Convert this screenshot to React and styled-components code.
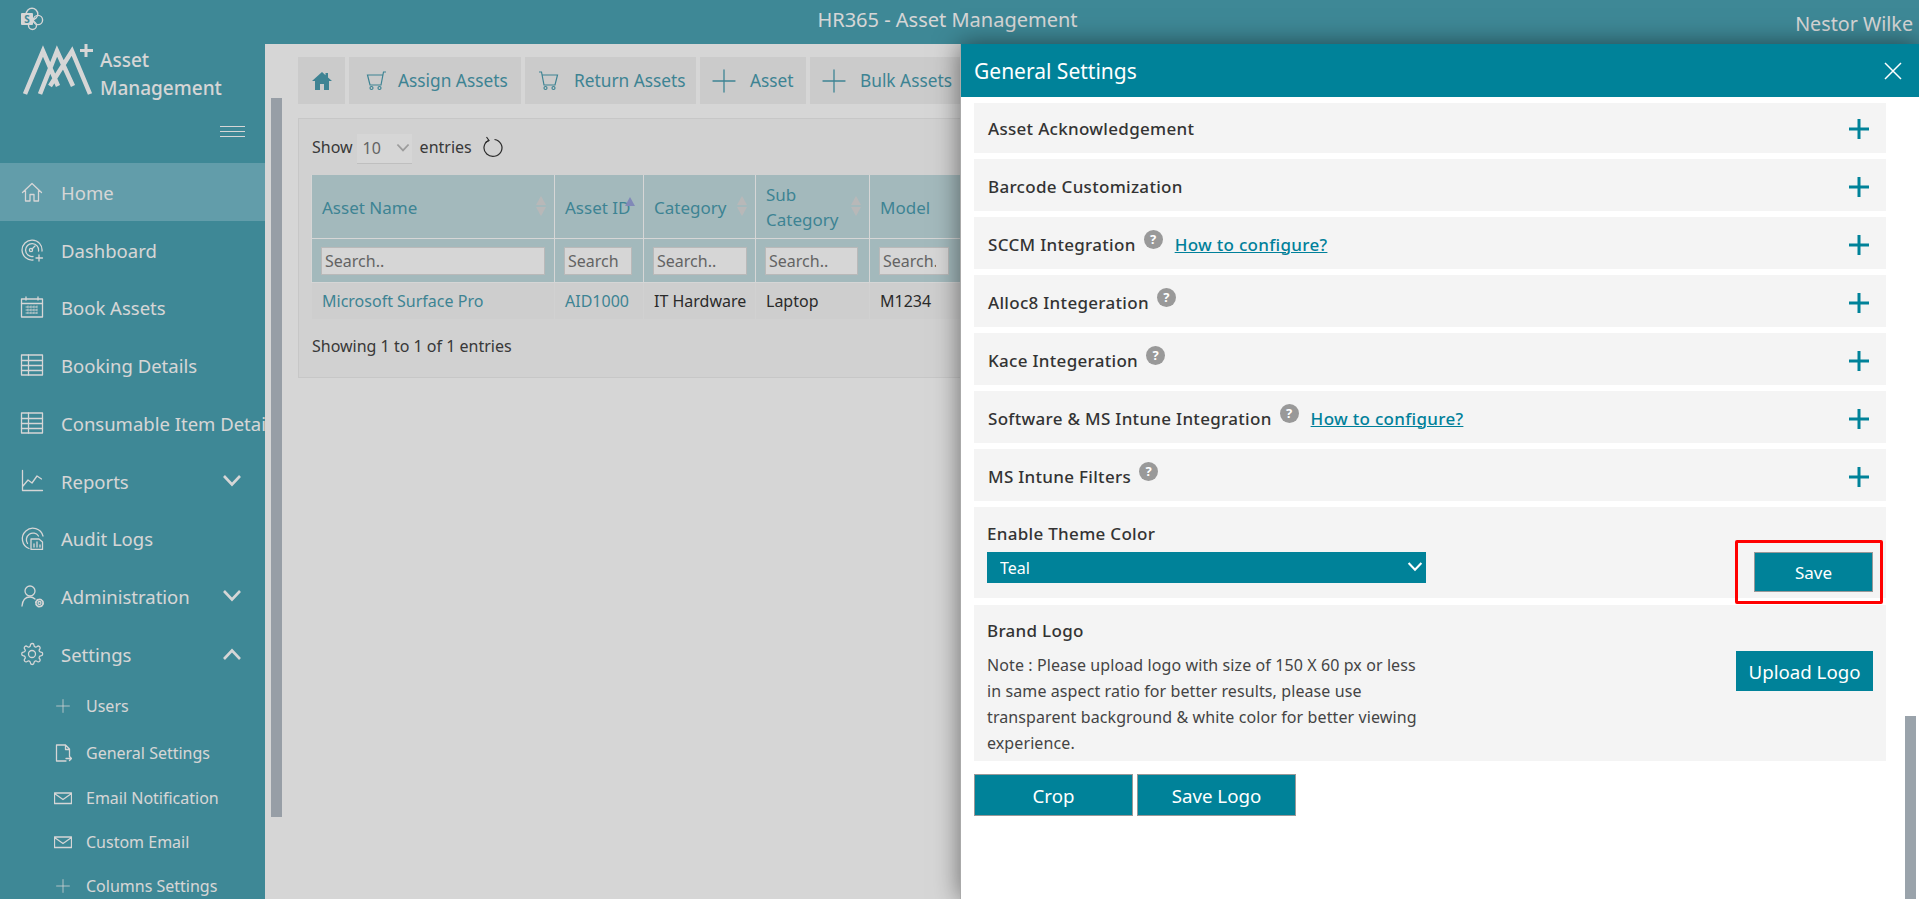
import React from "react";
import styled, { createGlobalStyle, css } from "styled-components";

const FONT = `"Noto Sans", "Open Sans", sans-serif`;

const GlobalStyle = createGlobalStyle`
  html, body {
    margin: 0;
    padding: 0;
    height: 100%;
    overflow: hidden;
    background: #fff;
    font-family: ${FONT};
  }
  * { box-sizing: border-box; }
`;

const labelFont = css`
  font-size: 17px;
  font-weight: 500;
  letter-spacing: 0.3px;
`;

//Icons
const Line = ({ size = 24, view = "0 0 24 24", width = 1.3, children }) => (
  <svg width={size} height={size} viewBox={view} fill="none" stroke="currentColor" strokeWidth={width} strokeLinecap="round" strokeLinejoin="round">
    {children}
  </svg>
);

const HomeIcon = () => (
  <Line><path d="M2.5 12.5 12 3.5l9.5 9M5.5 10.5V21h4.5v-6.5h4V21h4.5V10.5" /></Line>
);
const GaugeIcon = () => (
  <Line>
    <path d="M13 22a10 10 0 1 1 9-9" />
    <path d="M13 18.5a6.5 6.5 0 1 1 5.5-5.5" />
    <circle cx="11" cy="12" r="1.6" />
    <path d="m12 11 3-3M19 17v6M16 20h6.5" />
  </Line>
);
const CalendarIcon = () => (
  <Line>
    <rect x="1.5" y="4" width="21" height="18" />
    <path d="M1.5 8.5h21M6 2v3M18 2v3" />
    <path d="M6 12h12M6 15h12M6 18h12M8 11v8M11 11v8M14 11v8M17 11v8" strokeWidth="0.9" strokeDasharray="1.5 1.5" />
  </Line>
);
const TableIcon = () => (
  <Line>
    <rect x="1.5" y="2" width="21" height="20" />
    <path d="M1.5 7.5h21M1.5 12.5h21M1.5 17.5h21M8.5 2v20" />
  </Line>
);
const ChartIcon = () => (
  <Line><path d="M2.5 1.5v20h20M3 17l5-6 4 3 5-7 4.5 3" /></Line>
);
const AuditIcon = () => (
  <Line>
    <path d="M9 22.5A10.5 10.5 0 1 1 23 10" />
    <path d="M7.5 17.5A6.5 6.5 0 1 1 18.5 10" />
    <path d="M11 13h8l3.5 3v7.5H11zM14 21v-3M17 21v-5M20 21v-2" />
  </Line>
);
const AdminIcon = () => (
  <Line>
    <circle cx="10" cy="7" r="5" />
    <path d="M2 22c.5-5.500 3.500-9 8-9 2 0 3.500.6 5 2" />
    <circle cx="19.500" cy="19" r="1.500" />
    <circle cx="19.500" cy="19" r="3.600" strokeWidth="1.800" strokeDasharray="1.400 1.400" />
  </Line>
);
const GearIcon = () => (
  <Line>
    <circle cx="12" cy="12" r="3.500" />
    <path d="M12.200 1.500c1 0 1.800.8 1.800 1.800 0 1.600 1.900 2.400 3 1.300.7-.7 1.900-.7 2.600 0s.7 1.900 0 2.600c-1.100 1.100-.3 3 1.300 3 1 0 1.800.8 1.800 1.800s-.8 1.800-1.800 1.800c-1.600 0-2.400 1.900-1.300 3 .7.700.7 1.900 0 2.600s-1.900.7-2.600 0c-1.100-1.100-3-.3-3 1.300 0 1-.8 1.800-1.800 1.800s-1.800-.8-1.800-1.800c0-1.600-1.900-2.400-3-1.300-.7.700-1.900.7-2.600 0s-.7-1.900 0-2.600c1.100-1.100.3-3-1.300-3-1 0-1.800-.8-1.800-1.800s.8-1.800 1.800-1.800c1.600 0 2.400-1.900 1.300-3-.7-.7-.7-1.900 0-2.600s1.900-.7 2.600 0c1.100 1.100 3 .3 3-1.300 0-1 .8-1.800 1.800-1.800z" />
  </Line>
);
const PlusThin = ({ size = 14 }) => (
  <Line size={size}><path d="M12 1v22M1 12h22" /></Line>
);
const DocIcon = () => (
  <Line size={18} view="0 0 18 18"><path d="M12 17H2.500V1h9l4 4v7M11.500 1v4.500H15.500M12 14.500h5.500M15.500 12.500l2 2-2 2" /></Line>
);
const MailIcon = () => (
  <Line size={18} view="0 0 18 18"><path d="M.5 4h17v10.500H.5zM.5 4.500 9 10.500l8.500-6" /></Line>
);
const Chevron = ({ up }) => (
  <svg width="20" height="12" viewBox="0 0 20 12" fill="none" stroke="currentColor" strokeWidth="2.600">
    <path d={up ? "M2 11 10 2.500 18 11" : "M2 1 10 9.500 18 1"} />
  </svg>
);
const CartIcon = ({ flip }) => (
  <svg width="21" height="20" viewBox="0 0 21 20" fill="none" stroke="currentColor" strokeWidth="1.200" style={flip ? { transform: "scaleX(-1)" } : undefined}>
    <path d="M20 1h-2.500l-2.500 13H4L1.500 4H17" />
    <circle cx="5.500" cy="17" r="1.500" />
    <circle cx="13.500" cy="17" r="1.500" />
  </svg>
);
const SolidHome = () => (
  <svg width="20" height="18" viewBox="0 0 20 18" fill="currentColor">
    <path d="M10 0 0 9h3v9h5v-6h4v6h5V9h3l-4-3.600V1h-2.500v2.200z" />
  </svg>
);
const SharePointIcon = () => (
  <svg width="24" height="24" viewBox="0 0 24 24" fill="none">
    <circle cx="12" cy="7" r="5.800" stroke="#fff" strokeWidth="1.400" />
    <circle cx="18" cy="13" r="4.600" stroke="#fff" strokeWidth="1.400" />
    <circle cx="12.500" cy="18.500" r="4" stroke="#fff" strokeWidth="1.400" />
    <rect x="1" y="6" width="12" height="12" rx="1" fill="#fff" />
    <text x="7" y="15.500" textAnchor="middle" fontSize="10" fontWeight="700" fill="#4aa2b3" fontFamily={FONT}>S</text>
  </svg>
);
const LogoMark = () => (
  <svg width="70" height="52" viewBox="0 0 70 52" fill="none" stroke="#fff">
    <path d="M2 50 20 7l15 35M17 50 34 7l16 35M27 42 49 7l18 43" strokeWidth="4.500" />
    <path d="M63 0v13M57 6.500h13" strokeWidth="3" />
  </svg>
);
const PlusBold = () => (
  <svg width="20" height="20" viewBox="0 0 20 20" stroke="#008299" strokeWidth="3">
    <path d="M10 0v20M0 10h20" />
  </svg>
);
const CloseIcon = () => (
  <svg width="18" height="18" viewBox="0 0 18 18" stroke="#fff" strokeWidth="1.500">
    <path d="m1 1 16 16M17 1 1 17" />
  </svg>
);
const RefreshIcon = () => (
  <svg width="21" height="22" viewBox="0 0 21 22" fill="none" stroke="#333" strokeWidth="1.200">
    <path d="M6.500 4.500a9 8.500 0 1 0 6-1" />
    <path d="M4.500 1 7 4.500 3.500 6.500" />
  </svg>
);

const Page = styled.div`
  position: relative;
  width: 100vw;
  height: 100vh;
  overflow: hidden;
  display: flex;
  flex-direction: column;
  color: #333;
`;

const TopBar = styled.header`
  flex: 0 0 44px;
  display: flex;
  align-items: center;
  justify-content: space-between;
  position: relative;
  padding: 0 6px 6px 20px;
  background: #4aa2b3;
  color: #fff;
`;

const AppTitle = styled.div`
  position: absolute;
  left: 0;
  right: 24px;
  top: 6px;
  text-align: center;
  font-size: 20px;
  pointer-events: none;
`;

const UserName = styled.div`
  font-size: 19.700px;
  padding-top: 8px;
  color: #fff;
`;

const Body = styled.div`
  flex: 1;
  min-height: 0;
  display: flex;
`;

const Sidebar = styled.nav`
  flex: 0 0 265px;
  background: #4aa2b3;
  color: #fff;
  overflow: hidden;
  white-space: nowrap;
`;

const Brand = styled.div`
  height: 119px;
  position: relative;
  padding-left: 23px;
  display: flex;
  gap: 7px;
  align-items: flex-start;
`;

const BrandText = styled.div`
  font-size: 19px;
  font-weight: 500;
  line-height: 28px;
  padding-top: 2px;
`;

const Burger = styled.div`
  position: absolute;
  left: 220px;
  top: 82px;
  width: 25px;
  height: 11px;
  border-top: 1px solid #fff;
  border-bottom: 1px solid #fff;

  &::before {
    content: "";
    display: block;
    height: 1px;
    margin-top: 4px;
    background: #fff;
  }
`;

const NavItem = styled.div`
  height: 57.75px;
  display: flex;
  align-items: center;
  gap: 17px;
  padding: 0 23px 0 20px;
  font-size: 18.500px;
  background: ${(p) => (p.$active ? "#75bbcb" : "transparent")};

  > svg {
    flex: 0 0 auto;
  }
  > span {
    flex: 1;
    padding-top: 1px;
  }
`;

const SubItem = styled.div`
  height: ${(p) => (p.$tall ? "46.500px" : "44px")};
  display: flex;
  align-items: center;
  padding-left: 54px;
  font-size: 16px;

  > svg {
    flex: 0 0 18px;
    width: 18px;
    margin-right: 14px;
  }
`;

const Main = styled.main`
  flex: 1;
  min-width: 0;
  position: relative;
  padding: 13px 0 0 33px;
  overflow: hidden;
  background: #fff;
`;

const PageScrollThumb = styled.div`
  position: absolute;
  left: 6px;
  top: 54px;
  width: 11px;
  height: 719px;
  background: #b4bdc6;
`;

const Toolbar = styled.div`
  display: flex;
  gap: 4px;
  height: 47px;
`;

const ToolButton = styled.div`
  flex: 0 0 ${(p) => p.$w}px;
  display: flex;
  align-items: center;
  gap: ${(p) => p.$gap}px;
  padding-left: ${(p) => p.$pad}px;
  background: #f2f2f2;
  color: #4a9db0;
  font-size: 17.300px;
  white-space: nowrap;
`;

const Card = styled.section`
  margin-top: 14px;
  width: 1500px;
  height: 260px;
  padding: 0 12px 0 13px;
  background: #f9f9f9;
  border: 1px solid #eee;
`;

const ShowRow = styled.div`
  height: 56px;
  display: flex;
  align-items: center;
  font-size: 16px;
  color: #444;
`;

const PageSize = styled.div`
  width: 55px;
  height: 30px;
  margin: 3px 8px 0 4px;
  display: flex;
  align-items: center;
  justify-content: space-between;
  padding: 0 2px 0 6px;
  background: #fff;
  border-bottom: 1px solid #e4e4e4;
  color: #777;
  font-size: 16px;

  svg {
    width: 14px;
    color: #bbb;
  }
`;

const RefreshSlot = styled.span`
  display: flex;
  margin-left: 10px;
`;

const Table = styled.table`
  width: 1300px;
  margin-left: -1px;
  table-layout: fixed;
  border-collapse: collapse;
  font-size: 16px;
`;

const HeadCell = styled.th`
  position: relative;
  height: 63px;
  padding: 2px 22px 0 10px;
  background: #c3dde1;
  border: 1px solid #fff;
  border-top: 0;
  color: #4a9db0;
  font-weight: 400;
  font-size: 17px;
  line-height: 25px;
  text-align: left;
`;

const SortArrows = styled.i`
  position: absolute;
  right: 7px;
  top: 50%;
  margin-top: -10px;
  width: 11px;
  height: 20px;

  &::before,
  &::after {
    content: "";
    position: absolute;
    left: 0;
    border-left: 5.500px solid transparent;
    border-right: 5.500px solid transparent;
  }
  &::before {
    top: 0;
    border-bottom: 9px solid #dcdcdc;
  }
  &::after {
    bottom: 0;
    border-top: 9px solid #dcdcdc;
  }
`;

const SortedMark = styled.i`
  position: absolute;
  left: 70px;
  top: 22px;
  border-left: 5px solid transparent;
  border-right: 5px solid transparent;
  border-bottom: 9px solid #9aa4dc;
`;

const FilterCell = styled.td`
  height: 44px;
  padding: 2px 9px 0;
  background: #c3dde1;
  border: 1px solid #fff;
`;

const FilterInput = styled.input`
  display: block;
  width: ${(p) => p.$w}px;
  height: 28px;
  padding: 0 12px 0 3px;
  border: 1px solid #ddd;
  background: #fff;
  font: 16px ${FONT};
  outline: 0;

  &::placeholder {
    color: #777;
    opacity: 1;
  }
`;

const DataCell = styled.td`
  height: 37px;
  padding: 1px 10px 0;
  background: #f6f6f6;
  border: 1px solid #fafafa;
  color: ${(p) => (p.$link ? "#4a9db0" : "#333")};
  white-space: nowrap;
  overflow: hidden;
`;

const ShowingText = styled.div`
  margin-top: 15px;
  font-size: 16px;
  color: #444;
`;

const Dim = styled.div`
  position: absolute;
  inset: 0;
  background: rgba(0, 0, 0, 0.16);
`;

const Panel = styled.aside`
  position: absolute;
  left: 960px;
  right: 0;
  top: 44px;
  bottom: 0;
  background: #fff;
  border-left: 1px solid #aaa;
  box-shadow: 0 0 24px rgba(0, 0, 0, 0.5);
  display: flex;
  flex-direction: column;
`;

const PanelHead = styled.div`
  flex: 0 0 53px;
  display: flex;
  align-items: center;
  justify-content: space-between;
  padding: 0 17px 0 13px;
  background: #008299;
  color: #fff;
  font-size: 21px;
`;

const PanelBody = styled.div`
  flex: 1;
  min-height: 0;
  padding: 6px 33px 0 13px;
  display: flex;
  flex-direction: column;
  gap: 6px;
`;

const Row = styled.div`
  flex: 0 0 ${(p) => p.$h || 52}px;
  display: flex;
  align-items: center;
  padding: ${(p) => (p.$h ? 0 : 2)}px 17px 0 14px;
  background: #f4f4f4;
  ${labelFont}
  color: #333;

  > svg {
    margin-top: 1px;
  }
`;

const RowTitle = styled.span`
  flex: 1;
  display: flex;
  align-items: center;
  gap: 7px;
`;

const Help = styled.i`
  width: 19px;
  height: 19px;
  margin: -9px 0 0 1px;
  border-radius: 50%;
  background: #999;
  color: #fff;
  font: 700 13px/19px ${FONT};
  letter-spacing: 0;
  text-align: center;
`;

const HowTo = styled.a`
  margin-left: 5px;
  color: #00809a;
  font-weight: 500;
  text-decoration: underline;
`;

const ThemeRow = styled.div`
  flex: 0 0 91px;
  display: flex;
  justify-content: space-between;
  padding: 0 13px;
  background: #f4f4f4;
`;

const FieldLabel = styled.div`
  ${labelFont}
  line-height: 24px;
  padding-top: 15px;
  margin-bottom: 6px;
  color: #333;
`;

const SelectWrap = styled.div`
  position: relative;
  width: 439px;
  height: 31px;
  color: #fff;

  svg {
    position: absolute;
    right: 3px;
    top: 9px;
    width: 16px;
    pointer-events: none;
  }
`;

const ThemeSelect = styled.select`
  width: 100%;
  height: 100%;
  appearance: none;
  border: 0;
  border-radius: 0;
  padding: 0 13px;
  background: #008299;
  color: #fff;
  font: 16px ${FONT};
`;

const SaveWrap = styled.div`
  position: relative;
  align-self: flex-start;
  margin-top: 45px;
`;

const RedBox = styled.div`
  position: absolute;
  inset: -12px -10px -12px -19px;
  border: 3px solid #f00;
  border-radius: 2px;
  pointer-events: none;
`;

const TealButton = styled.button`
  width: ${(p) => p.$w}px;
  height: ${(p) => p.$h || 40}px;
  padding: 0;
  background: #008299;
  border: ${(p) => (p.$flat ? "0" : "1px solid #999")};
  color: #fff;
  font: ${(p) => p.$size || 18.700}px ${FONT};
`;

const BrandRow = styled.div`
  flex: 0 0 156px;
  display: flex;
  justify-content: space-between;
  padding: 14px 13px 0 13px;
  margin-top: 1px;
  background: #f4f4f4;
`;

const BrandHeading = styled.div`
  ${labelFont}
  line-height: 24px;
  margin-bottom: 9px;
  color: #333;
`;

const Note = styled.p`
  margin: 0;
  width: 445px;
  font-size: 16px;
  letter-spacing: 0.1px;
  line-height: 26px;
  color: #444;
`;

const UploadSlot = styled.div`
  padding-top: 32px;
`;

const CropRow = styled.div`
  display: flex;
  gap: 4px;
  margin-top: 7px;
`;

const PanelThumb = styled.div`
  position: absolute;
  right: 3px;
  bottom: 0;
  width: 11px;
  height: 183px;
  background: #9aa3ab;
`;

const menu = [
  { label: "Home", icon: <HomeIcon />, active: true },
  { label: "Dashboard", icon: <GaugeIcon /> },
  { label: "Book Assets", icon: <CalendarIcon /> },
  { label: "Booking Details", icon: <TableIcon /> },
  { label: "Consumable Item Details", icon: <TableIcon /> },
  { label: "Reports", icon: <ChartIcon />, arrow: "down" },
  { label: "Audit Logs", icon: <AuditIcon /> },
  { label: "Administration", icon: <AdminIcon />, arrow: "down" },
  { label: "Settings", icon: <GearIcon />, arrow: "up" },
];

const subMenu = [
  { label: "Users", icon: <PlusThin />, tall: true },
  { label: "General Settings", icon: <DocIcon />, tall: true },
  { label: "Email Notification", icon: <MailIcon /> },
  { label: "Custom Email", icon: <MailIcon /> },
  { label: "Columns Settings", icon: <PlusThin /> },
];

const columns = [
  { title: "Asset Name", width: 243, input: 224 },
  { title: "Asset\u00a0ID", width: 89, input: 68, sorted: true },
  { title: "Category", width: 112, input: 94 },
  { title: "Sub Category", width: 114, input: 93 },
  { title: "Model", width: 114, input: 70 },
  { title: "Status", width: 628, input: 120 },
];

const rowsCollapsed = [
  { title: "Asset Acknowledgement", h: 50 },
  { title: "Barcode Customization" },
  { title: "SCCM Integration", help: true, link: true },
  { title: "Alloc8 Integeration", help: true },
  { title: "Kace Integeration", help: true },
  { title: "Software & MS Intune Integration", help: true, link: true },
  { title: "MS Intune Filters", help: true },
];

const App = () => {
  return (
    <Page>
      <GlobalStyle />
      <TopBar>
        <SharePointIcon />
        <AppTitle>HR365 - Asset Management</AppTitle>
        <UserName>Nestor Wilke</UserName>
      </TopBar>
      <Body>
        <Sidebar>
          <Brand>
            <LogoMark />
            <BrandText>
              Asset
              <br />
              Management
            </BrandText>
            <Burger />
          </Brand>
          {menu.map((item) => (
            <NavItem key={item.label} $active={item.active}>
              {item.icon}
              <span>{item.label}</span>
              {item.arrow && <Chevron up={item.arrow === "up"} />}
            </NavItem>
          ))}
          {subMenu.map((item) => (
            <SubItem key={item.label} $tall={item.tall}>
              {item.icon}
              {item.label}
            </SubItem>
          ))}
        </Sidebar>
        <Main>
          <PageScrollThumb />
          <Toolbar>
            <ToolButton $w={47} $pad={14} $gap={0}><SolidHome /></ToolButton>
            <ToolButton $w={172} $pad={17} $gap={11}><CartIcon />Assign Assets</ToolButton>
            <ToolButton $w={171} $pad={13} $gap={15}><CartIcon flip />Return Assets</ToolButton>
            <ToolButton $w={106} $pad={12} $gap={14}><PlusThin size={24} />Asset</ToolButton>
            <ToolButton $w={150} $pad={12} $gap={14}><PlusThin size={24} />Bulk Assets</ToolButton>
          </Toolbar>
          <Card>
            <ShowRow>
              Show
              <PageSize>10<Chevron /></PageSize>
              entries
              <RefreshSlot><RefreshIcon /></RefreshSlot>
            </ShowRow>
            <Table>
              <colgroup>
                {columns.map((c) => (
                  <col key={c.title} width={c.width} />
                ))}
              </colgroup>
              <thead>
                <tr>
                  {columns.map((c) => (
                    <HeadCell key={c.title}>
                      {c.title}
                      {c.sorted ? <SortedMark /> : <SortArrows />}
                    </HeadCell>
                  ))}
                </tr>
                <tr>
                  {columns.map((c) => (
                    <FilterCell key={c.title}>
                      <FilterInput placeholder="Search.." $w={c.input} />
                    </FilterCell>
                  ))}
                </tr>
              </thead>
              <tbody>
                <tr>
                  <DataCell $link>Microsoft Surface Pro</DataCell>
                  <DataCell $link>AID1000</DataCell>
                  <DataCell>IT Hardware</DataCell>
                  <DataCell>Laptop</DataCell>
                  <DataCell>M1234</DataCell>
                  <DataCell>Active</DataCell>
                </tr>
              </tbody>
            </Table>
            <ShowingText>Showing 1 to 1 of 1 entries</ShowingText>
          </Card>
        </Main>
      </Body>
      <Dim />
      <Panel>
        <PanelHead>
          General Settings
          <CloseIcon />
        </PanelHead>
        <PanelBody>
          {rowsCollapsed.map((row) => (
            <Row key={row.title} $h={row.h}>
              <RowTitle>
                {row.title}
                {row.help && <Help>?</Help>}
                {row.link && <HowTo href="#">How to configure?</HowTo>}
              </RowTitle>
              <PlusBold />
            </Row>
          ))}
          <ThemeRow>
            <div>
              <FieldLabel>Enable Theme Color</FieldLabel>
              <SelectWrap>
                <ThemeSelect defaultValue="Teal">
                  <option>Teal</option>
                  <option>Blue</option>
                </ThemeSelect>
                <Chevron />
              </SelectWrap>
            </div>
            <SaveWrap>
              <TealButton $w={119} $size={17}>Save</TealButton>
              <RedBox />
            </SaveWrap>
          </ThemeRow>
          <BrandRow>
            <div>
              <BrandHeading>Brand Logo</BrandHeading>
              <Note>
                Note : Please upload logo with size of 150 X 60 px or less in same aspect ratio for better results, please use transparent background &amp; white color for better viewing experience.
              </Note>
            </div>
            <UploadSlot>
              <TealButton $w={137} $flat>Upload Logo</TealButton>
            </UploadSlot>
          </BrandRow>
          <CropRow>
            <TealButton $w={159} $h={42}>Crop</TealButton>
            <TealButton $w={159} $h={42}>Save Logo</TealButton>
          </CropRow>
        </PanelBody>
        <PanelThumb />
      </Panel>
    </Page>
  );
};

export default App;
